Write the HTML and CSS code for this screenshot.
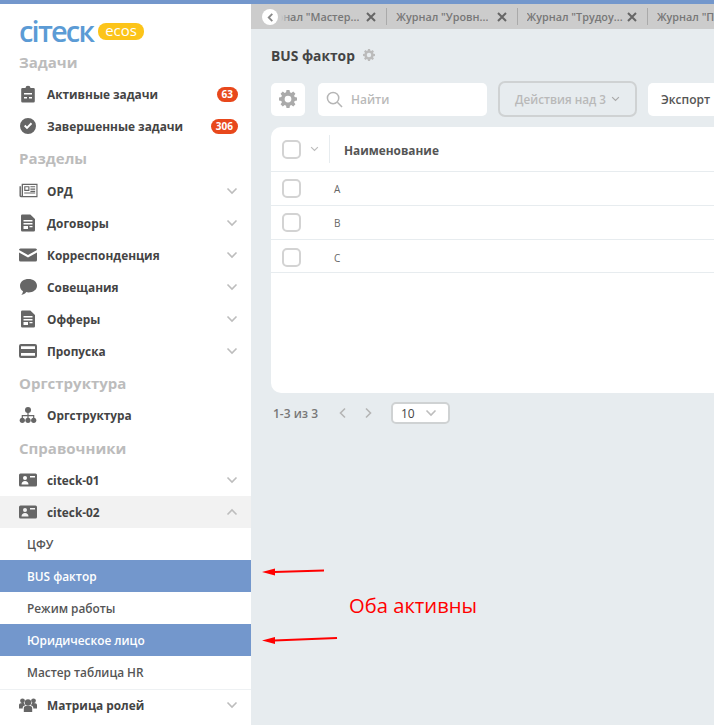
FILE: index.html
```html
<!DOCTYPE html>
<html>
<head>
    <title>BUS фактор</title>
    <link rel="stylesheet" href="styles.css">
</head>
<body>
    <div class="top-line"></div>
    <div class="layout">
        <!-- Sidebar -->
        <aside class="sidebar">
            <div class="logo">
                <span class="logo-name">ciтeск</span>
                <span class="logo-badge">ecos</span>
            </div>
            <div class="group-title">Задачи</div>
            <div class="row">
                <svg class="icon" viewBox="0 0 18 18"><path d="M3.500 3H6.500a2.500 2.200 0 0 1 5 0h3A1.300 1.300 0 0 1 15.800 4.300v12a1.300 1.300 0 0 1-1.300 1.300h-11a1.300 1.300 0 0 1-1.300-1.300v-12A1.300 1.300 0 0 1 3.500 3zm1.500 5v1.500h8V8zm0 4v1.500h3V12zm5 0v1.500h3V12z" fill-rule="evenodd"/></svg>
                <span class="row-label">Активные задачи</span>
                <span class="badge">63</span>
            </div>
            <div class="row">
                <svg class="icon" viewBox="0 0 18 18"><path d="M9 1a8 8 0 1 1 0 16A8 8 0 0 1 9 1zM5 9.200l3 3 5.200-5.200-1.400-1.400L8 9.400 6.400 7.800z" fill-rule="evenodd"/></svg>
                <span class="row-label">Завершенные задачи</span>
                <span class="badge">306</span>
            </div>
            <div class="group-title">Разделы</div>
            <div class="row">
                <svg class="icon icon-paper" viewBox="0 0 20 15"><path d="M3 .5h16.500v14H2A1.500 1.500 0 0 1 .5 13V3H2v10h.8V.5zm1.200 1.200v11.600h14.100V1.700zM5.500 3h5.500v5H5.500zm1.200 1.200v2.600h3.100V4.200zM12 3h5v1.200h-5zm0 2.400h5v1.200h-5zm0 2.400h5V9h-5zM5.500 9.500H17v1.200H5.500z" fill-rule="evenodd"/></svg>
                <span class="row-label">ОРД</span>
                <svg class="chevron" viewBox="0 0 12 8"><path d="M1.500 1.500 6 6l4.500-4.500"/></svg>
            </div>
            <div class="row">
                <svg class="icon" viewBox="0 0 18 18"><path d="M3.300 .5h8L16 5v11.200a1.300 1.300 0 0 1-1.300 1.300H3.300A1.300 1.300 0 0 1 2 16.200V1.800A1.300 1.300 0 0 1 3.300 .5zM4.500 6v1.500h9V6zm0 3v1.500h9V9zm0 3v3h4.500v-3zm6 0v1.200h3V12z" fill-rule="evenodd"/></svg>
                <span class="row-label">Договоры</span>
                <svg class="chevron" viewBox="0 0 12 8"><path d="M1.500 1.500 6 6l4.500-4.500"/></svg>
            </div>
            <div class="row">
                <svg class="icon icon-wide" viewBox="0 0 18 14"><path d="M1.500 .5h15A1.500 1.500 0 0 1 18 2L9 7 0 2A1.500 1.500 0 0 1 1.500 .5zM0 4.500 9 9.500l9-5V12a1.500 1.500 0 0 1-1.500 1.500h-15A1.500 1.500 0 0 1 0 12z"/></svg>
                <span class="row-label">Корреспонденция</span>
                <svg class="chevron" viewBox="0 0 12 8"><path d="M1.500 1.500 6 6l4.500-4.500"/></svg>
            </div>
            <div class="row">
                <svg class="icon" viewBox="0 0 18 18"><path d="M9.500 1c4.500 0 8.500 2.700 8.500 6.700s-4 6.700-8.500 6.700c-.8 0-1.500-.1-2.200-.3C6 15.800 4.300 16.800 2.300 17c1-1.200 1.600-2.500 1.700-3.800C2 12 1 10 1 7.700 1 3.700 5 1 9.500 1z"/></svg>
                <span class="row-label">Совещания</span>
                <svg class="chevron" viewBox="0 0 12 8"><path d="M1.500 1.500 6 6l4.500-4.500"/></svg>
            </div>
            <div class="row">
                <svg class="icon" viewBox="0 0 18 18"><path d="M3.300 .5h8L16 5v11.200a1.300 1.300 0 0 1-1.300 1.300H3.300A1.300 1.300 0 0 1 2 16.200V1.800A1.300 1.300 0 0 1 3.300 .5zM4.500 6v1.500h9V6zm0 3v1.500h9V9zm0 3v3h4.500v-3zm6 0v1.200h3V12z" fill-rule="evenodd"/></svg>
                <span class="row-label">Офферы</span>
                <svg class="chevron" viewBox="0 0 12 8"><path d="M1.500 1.500 6 6l4.500-4.500"/></svg>
            </div>
            <div class="row">
                <svg class="icon icon-wide" viewBox="0 0 18 14"><path d="M2 0h14a2 2 0 0 1 2 2v10a2 2 0 0 1-2 2H2a2 2 0 0 1-2-2V2a2 2 0 0 1 2-2zm0 2.200v2.800h14V2.200zM2 9v2.800h14V9z" fill-rule="evenodd"/></svg>
                <span class="row-label">Пропуска</span>
                <svg class="chevron" viewBox="0 0 12 8"><path d="M1.500 1.500 6 6l4.500-4.500"/></svg>
            </div>
            <div class="group-title">Оргструктура</div>
            <div class="row">
                <svg class="icon" viewBox="0 0 18 18"><circle cx="9" cy="4" r="3"/><circle cx="3.300" cy="14.300" r="2.600"/><circle cx="9" cy="14.300" r="2.600"/><circle cx="14.700" cy="14.300" r="2.600"/><path d="M8.400 6h1.200v3h5.700v3h-1.200v-1.800H9.600V12H8.400v-1.800H3.900V12H2.700V9h5.700z"/></svg>
                <span class="row-label">Оргструктура</span>
            </div>
            <div class="group-title">Справочники</div>
            <div class="row">
                <svg class="icon icon-wide" viewBox="0 0 18 14"><path d="M1.500 .5h15A1.500 1.500 0 0 1 18 2v10a1.500 1.500 0 0 1-1.500 1.500h-15A1.500 1.500 0 0 1 0 12V2A1.500 1.500 0 0 1 1.500 .5zM6 3a2 2 0 1 0 0 4 2 2 0 0 0 0-4zM2.500 11.500h7c0-2-1.500-3.500-3.500-3.500s-3.500 1.500-3.500 3.500zM11 3v1.500h5V3z" fill-rule="evenodd"/></svg>
                <span class="row-label">citeck-01</span>
                <svg class="chevron" viewBox="0 0 12 8"><path d="M1.500 1.500 6 6l4.500-4.500"/></svg>
            </div>
            <div class="row row-open">
                <svg class="icon icon-wide" viewBox="0 0 18 14"><path d="M1.500 .5h15A1.500 1.500 0 0 1 18 2v10a1.500 1.500 0 0 1-1.500 1.500h-15A1.500 1.500 0 0 1 0 12V2A1.500 1.500 0 0 1 1.500 .5zM6 3a2 2 0 1 0 0 4 2 2 0 0 0 0-4zM2.500 11.500h7c0-2-1.500-3.500-3.500-3.500s-3.500 1.500-3.500 3.500zM11 3v1.500h5V3z" fill-rule="evenodd"/></svg>
                <span class="row-label">citeck-02</span>
                <svg class="chevron" viewBox="0 0 12 8"><path d="M1.500 6.500 6 2l4.500 4.500"/></svg>
            </div>
            <div class="row sub-row">ЦФУ</div>
            <div class="row sub-row active">BUS фактор</div>
            <div class="row sub-row">Режим работы</div>
            <div class="row sub-row active">Юридическое лицо</div>
            <div class="row sub-row">Мастер таблица HR</div>
            <div class="row row-last">
                <svg class="icon" viewBox="0 0 18 18"><circle cx="9" cy="6.500" r="3.200"/><circle cx="3.500" cy="4.800" r="2.400"/><circle cx="14.500" cy="4.800" r="2.400"/><path d="M4.800 16v-4c0-1.500 1.400-2.200 4.200-2.200s4.200.7 4.200 2.200v4zM0 12.500V9c0-1.200 1.200-2 3.500-2 .6 0 1.100 0 1.500.1.200.9.700 1.600 1.300 2.100C4.500 9.700 3.700 10.600 3.700 12v.5zm18 0V9c0-1.200-1.200-2-3.500-2-.6 0-1.100 0-1.500.1-.2.9-.7 1.600-1.300 2.100 1.800.5 2.600 1.400 2.600 2.800v.5z"/></svg>
                <span class="row-label">Матрица ролей</span>
                <svg class="chevron" viewBox="0 0 12 8"><path d="M1.500 1.500 6 6l4.500-4.500"/></svg>
            </div>
        </aside>

        <!-- Main area -->
        <main class="content">
            <div class="tabs">
                <div class="tabs-track">
                    <div class="tab tab-scrolled"><span class="tab-title">Журнал "Мастер...</span><svg class="tab-close" viewBox="0 0 10 10"><path d="M1 1l8 8M9 1l-8 8"/></svg></div>
                    <div class="tab"><span class="tab-title">Журнал "Уровн...</span><svg class="tab-close" viewBox="0 0 10 10"><path d="M1 1l8 8M9 1l-8 8"/></svg></div>
                    <div class="tab"><span class="tab-title">Журнал "Трудоу...</span><svg class="tab-close" viewBox="0 0 10 10"><path d="M1 1l8 8M9 1l-8 8"/></svg></div>
                    <div class="tab tab-last"><span class="tab-title">Журнал "По</span></div>
                </div>
                <div class="tabs-fade"></div>
                <div class="tabs-back">
                    <svg viewBox="0 0 10 12"><path d="M7 2 3 6l4 4"/></svg>
                </div>
            </div>

            <div class="page">
                <div class="title-line">
                    <h1 class="page-title">BUS фактор</h1>
                    <svg class="gear gear-small" viewBox="0 0 24 24"><use href="#gear"/></svg>
                </div>

                <div class="toolbar">
                    <button class="tool-btn settings-btn">
                        <svg class="gear" viewBox="0 0 24 24"><path id="gear" fill-rule="evenodd" d="M10 1h4l.6 3.100 1.800.8L19 3.100 21.900 6l-1.800 2.600.8 1.800L24 11v4l-3.100.6-.8 1.800 1.800 2.600L19 22.900l-2.600-1.800-1.800.8L14 25h-4l-.6-3.100-1.800-.8L5 22.900 2.100 20l1.800-2.600-.8-1.800L0 15v-4l3.100-.6.8-1.800L2.100 6 5 3.100l2.600 1.800 1.800-.8zM12 8.500a4.500 4.500 0 1 0 0 9 4.500 4.500 0 0 0 0-9z" transform="translate(0 -1)"/></svg>
                    </button>
                    <div class="search">
                        <svg class="search-icon" viewBox="0 0 18 18"><circle cx="7.500" cy="7.500" r="6"/><path d="m12 12 5 5"/></svg>
                        <span>Найти</span>
                    </div>
                    <div class="actions-btn">
                        Действия над 3
                        <svg class="chevron" viewBox="0 0 12 8"><path d="M1.500 1.500 6 6l4.500-4.500"/></svg>
                    </div>
                    <button class="tool-btn export-btn">Экспорт</button>
                </div>

                <div class="table-card">
                    <div class="table-head">
                        <span class="check"></span>
                        <svg class="chevron" viewBox="0 0 12 8"><path d="M1.500 1.500 6 6l4.500-4.500"/></svg>
                        <span class="head-sep"></span>
                        <span class="head-name">Наименование</span>
                    </div>
                    <div class="table-row"><span class="check"></span><span class="cell">A</span></div>
                    <div class="table-row"><span class="check"></span><span class="cell">B</span></div>
                    <div class="table-row"><span class="check"></span><span class="cell">C</span></div>
                </div>

                <div class="pager">
                    <span class="pager-count">1-3 из 3</span>
                    <svg class="pager-arrow" viewBox="0 0 8 12"><path d="M6 1.500 1.500 6 6 10.500"/></svg>
                    <svg class="pager-arrow" viewBox="0 0 8 12"><path d="M2 1.500 6.500 6 2 10.500"/></svg>
                    <div class="pager-size">
                        <span>10</span>
                        <svg class="chevron" viewBox="0 0 12 8"><path d="M1.500 1.500 6 6l4.500-4.500"/></svg>
                    </div>
                </div>
            </div>
        </main>
    </div>

    <!-- Annotation drawn on top of the screenshot -->
    <svg class="arrow arrow-one" viewBox="0 0 64 10"><path d="M62 3.500 12 5" class="arrow-line"/><path d="M0 5l13-3.500v7z" class="arrow-head"/></svg>
    <svg class="arrow arrow-two" viewBox="0 0 76 10"><path d="M75 3 12 5.500" class="arrow-line"/><path d="M0 5.500l13-3.500v7z" class="arrow-head"/></svg>
    <div class="note">Оба активны</div>
</body>
</html>
```

FILE: styles.css
```css
* {
    box-sizing: border-box;
}
html, body {
    height: 100%;
}
body {
    margin: 0;
    overflow: hidden;
    font-family: "Open Sans", sans-serif;
    color: #444;
    background-color: #e7ecef;
    position: relative;
}
.top-line {
    height: 4px;
    background-color: #7397cc;
}
.layout {
    display: flex;
    height: 721px;
}

/* --- Sidebar --- */
.sidebar {
    width: 251px;
    flex-shrink: 0;
    background-color: #fff;
}
.logo {
    height: 42px;
    padding: 12px 0 0 19px;
    display: flex;
    align-items: flex-start;
    gap: 5px;
}
.logo-name {
    font-size: 29px;
    line-height: 30px;
    font-weight: 600;
    letter-spacing: -1.8px;
    color: #5b9bd5;
}
.logo-badge {
    margin-top: 7px;
    height: 17px;
    padding: 0 7px;
    border-radius: 8px;
    background-color: #fcc419;
    color: #fff;
    font-size: 15px;
    line-height: 15px;
}
.group-title {
    height: 32.14px;
    line-height: 32px;
    padding-left: 19px;
    font-size: 15px;
    font-weight: 700;
    color: #bcbcbc;
}
.row {
    height: 32.14px;
    display: flex;
    align-items: center;
    padding: 0 13px 0 19px;
    font-size: 11.85px;
    font-weight: 700;
    color: #444;
}
.row-open {
    background-color: #f2f2f2;
}
.row-label {
    flex: 1;
    margin-left: 10px;
}
.icon {
    width: 18px;
    height: 18px;
    flex-shrink: 0;
    fill: #666;
}
.icon-wide {
    height: 14px;
}
.icon-paper {
    width: 19px;
    height: 15px;
    margin-right: -1px;
}
.chevron {
    width: 12px;
    height: 8px;
    flex-shrink: 0;
    fill: none;
    stroke: #bdbdbd;
    stroke-width: 1.6;
}
.badge {
    padding: 0 5px;
    height: 15px;
    line-height: 15px;
    border-radius: 8px;
    background-color: #e8481c;
    color: #fff;
    font-size: 10px;
    font-weight: 700;
}
.sub-row {
    padding-left: 27px;
    font-weight: 600;
    color: #555;
}
.sub-row.active {
    background-color: #7397cc;
    color: #fff;
}
.row-last {
    border-top: 1px solid #eef1f3;
}

/* --- Tabs --- */
.content {
    flex: 1;
    min-width: 0;
    overflow: hidden;
}
.tabs {
    height: 25px;
    background-color: #ccc;
    position: relative;
    overflow: hidden;
}
.tabs-track {
    display: flex;
    height: 25px;
    align-items: center;
    margin-left: 6px;
}
.tab {
    width: 130.3px;
    height: 17px;
    flex-shrink: 0;
    display: flex;
    align-items: center;
    justify-content: space-between;
    padding: 0 10px 0 9px;
    border-right: 1px solid #aaa;
    font-size: 10.8px;
    font-weight: 600;
    color: #777;
    white-space: nowrap;
}
.tab-scrolled {
    padding-left: 4px;
}
.tab-last {
    width: 67px;
    border-right: 0;
    padding-right: 0;
}
.tab-title {
    overflow: hidden;
}
.tab-close {
    width: 10px;
    height: 10px;
    flex-shrink: 0;
    fill: none;
    stroke: #666;
    stroke-width: 2;
}
.tabs-fade {
    position: absolute;
    left: 0;
    top: 0;
    width: 40px;
    height: 25px;
    background: linear-gradient(to right, #ccc 30px, rgba(204, 204, 204, 0));
}
.tabs-back {
    position: absolute;
    left: 11px;
    top: 5px;
    width: 16px;
    height: 16px;
    border-radius: 50%;
    background-color: #fff;
    display: flex;
    align-items: center;
    justify-content: center;
}
.tabs-back svg {
    width: 9px;
    height: 11px;
    fill: none;
    stroke: #888;
    stroke-width: 2;
}

/* --- Page --- */
.page {
    padding: 0 0 0 20px;
}
.title-line {
    height: 52px;
    display: flex;
    align-items: center;
    gap: 8px;
}
.page-title {
    margin: 0;
    font-size: 13.8px;
    font-weight: 700;
    color: #444;
}
.gear {
    width: 18px;
    height: 18px;
    fill: #aaa;
}
.gear-small {
    width: 12px;
    height: 12px;
    fill: #bbb;
}
.toolbar {
    display: flex;
    align-items: center;
    height: 36px;
    overflow: hidden;
}
.tool-btn {
    height: 33px;
    flex-shrink: 0;
    border: 0;
    border-radius: 5px;
    background-color: #fff;
    font-family: inherit;
    font-size: 12px;
    font-weight: 600;
    color: #555;
}
.settings-btn {
    width: 34px;
    padding: 0;
    display: flex;
    align-items: center;
    justify-content: center;
}
.search {
    width: 169px;
    height: 33px;
    flex-shrink: 0;
    margin-left: 13px;
    padding-left: 8px;
    display: flex;
    align-items: center;
    gap: 8px;
    border-radius: 5px;
    background-color: #fff;
    font-size: 12px;
    font-weight: 600;
    color: #b9b9b9;
}
.search-icon {
    width: 17px;
    height: 17px;
    fill: none;
    stroke: #b5b5b5;
    stroke-width: 1.6;
}
.actions-btn {
    width: 139px;
    height: 36px;
    flex-shrink: 0;
    margin-left: 11px;
    display: flex;
    align-items: center;
    justify-content: center;
    gap: 5px;
    border: 2px solid #cfd2d3;
    border-radius: 7px;
    font-size: 11.7px;
    font-weight: 600;
    color: #b9b9b9;
}
.actions-btn .chevron {
    width: 9px;
    height: 6px;
    stroke: #aaa;
}
.export-btn {
    width: 120px;
    margin-left: 11px;
    padding: 0 0 0 13px;
    text-align: left;
}
.table-card {
    width: 443px;
    height: 266px;
    margin-top: 10px;
    border-radius: 10px 0 0 10px;
    background-color: #fff;
}
.table-head {
    height: 45px;
    display: flex;
    align-items: center;
    padding-left: 11px;
    border-bottom: 1px solid #e7ecef;
}
.table-head .chevron {
    width: 9px;
    height: 6px;
    margin-left: 9px;
}
.head-sep {
    width: 1px;
    height: 28px;
    margin: 0 15px 0 10px;
    background-color: #e7ecef;
}
.head-name {
    margin: 2px 0 0 -1px;
    font-size: 11.85px;
    font-weight: 700;
    color: #555;
}
.check {
    width: 19px;
    height: 19px;
    flex-shrink: 0;
    border: 2px solid #d3d3d3;
    border-radius: 5px;
}
.table-row {
    height: 34px;
    display: flex;
    align-items: flex-start;
    padding: 7px 0 0 11px;
    border-bottom: 1px solid #e7ecef;
}
.table-row:last-child {
    height: 33px;
    padding-top: 8px;
}
.cell {
    margin: 1px 0 0 33px;
    font-size: 10px;
    line-height: 19px;
    color: #666;
}
.pager {
    height: 40px;
    display: flex;
    align-items: center;
    padding-left: 2px;
    font-size: 12px;
    font-weight: 600;
    color: #777;
}
.pager-count {
    width: 66px;
}
.pager-arrow {
    width: 8px;
    height: 12px;
    margin-right: 17px;
    fill: none;
    stroke: #b5b5b5;
    stroke-width: 1.6;
}
.pager-size {
    width: 59px;
    height: 22px;
    margin-left: 2px;
    padding: 0 11px 0 8px;
    display: flex;
    align-items: center;
    justify-content: space-between;
    border: 2px solid #cfd2d3;
    border-radius: 5px;
    background-color: #fff;
    font-size: 12px;
    font-weight: 400;
    color: #444;
}

/* --- Annotation --- */
.arrow {
    position: absolute;
    height: 10px;
}
.arrow-one {
    left: 262px;
    top: 567px;
    width: 64px;
}
.arrow-two {
    left: 262px;
    top: 635px;
    width: 76px;
}
.arrow-line {
    fill: none;
    stroke: #f00;
    stroke-width: 2;
}
.arrow-head {
    fill: #f00;
}
.note {
    position: absolute;
    left: 349px;
    top: 591px;
    font-size: 20.2px;
    line-height: 28px;
    color: #f00;
}
```
